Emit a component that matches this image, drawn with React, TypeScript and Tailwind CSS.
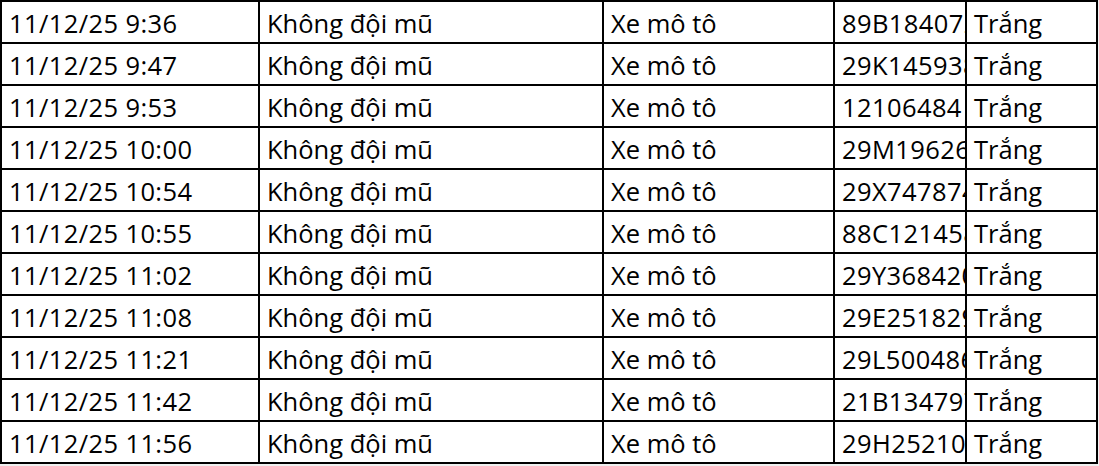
const ROWS = [
  { time: '11/12/25 9:36', plate: '89B184072' },
  { time: '11/12/25 9:47', plate: '29K145938' },
  { time: '11/12/25 9:53', plate: '12106484' },
  { time: '11/12/25 10:00', plate: '29M196263' },
  { time: '11/12/25 10:54', plate: '29X747874' },
  { time: '11/12/25 10:55', plate: '88C121458' },
  { time: '11/12/25 11:02', plate: '29Y368420' },
  { time: '11/12/25 11:08', plate: '29E251829' },
  { time: '11/12/25 11:21', plate: '29L500486' },
  { time: '11/12/25 11:42', plate: '21B134797' },
  { time: '11/12/25 11:56', plate: '29H252100' },
]

const cell = 'h-full border-r-2 border-black overflow-hidden whitespace-nowrap pl-[7px] pt-[3px] leading-[36px]'

export default function App() {
  return (
    <div
      className="w-[1099px] h-[466px] bg-[#f0f0f0] text-black text-[25.5px]"
      style={{ fontFamily: '"Open Sans", "Noto Sans", sans-serif' }}
    >
      <div className="w-[1098px] border-l-2 border-t-2 border-black bg-white">
        {ROWS.map((r) => (
          <div key={r.time} className="flex h-[42px] border-b-2 border-black">
            <div className={`${cell} w-[258px] pl-[6px] tracking-[0.4px]`}>{r.time}</div>
            <div className={`${cell} w-[344px]`}>Không đội mũ</div>
            <div className={`${cell} w-[231px]`}>Xe mô tô</div>
            <div className={`${cell} w-[132px] tracking-[0.4px]`}>{r.plate}</div>
            <div className={`${cell} w-[131px] pl-[6px]`}>Trắng</div>
          </div>
        ))}
      </div>
    </div>
  )
}
